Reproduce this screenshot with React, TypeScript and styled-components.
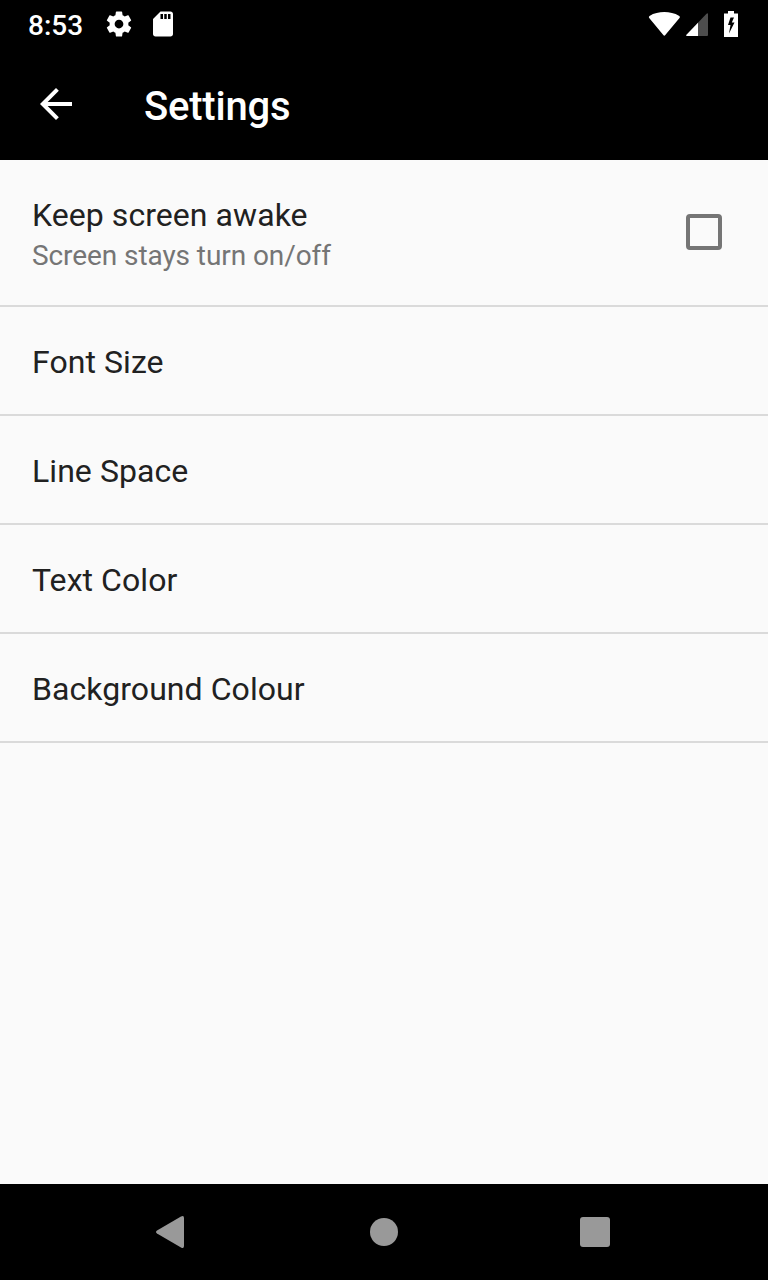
import React from "react";
import styled, { createGlobalStyle } from "styled-components";

const GlobalStyle = createGlobalStyle`
  * { box-sizing: border-box; }
  body { margin: 0; background: #fafafa; font-family: Roboto, sans-serif; }
`;

const Screen = styled.div`
  display: flex;
  flex-direction: column;
  width: 768px;
  height: 1280px;
  background: #fafafa;
  overflow: hidden;
`;

const StatusBar = styled.header`
  display: flex;
  align-items: center;
  flex: none;
  height: 48px;
  padding: 0 28px;
  background: #000;
  color: #fff;
`;

const Clock = styled.span`
  width: 78px;
  padding-top: 3px;
  font-size: 28px;
  line-height: 32px;
  font-weight: 500;
`;

const StatusIcons = styled.svg`
  display: block;
  flex: none;
`;

const Spacer = styled.div`
  flex: 1;
`;

const AppBar = styled.div`
  display: flex;
  align-items: center;
  flex: none;
  height: 112px;
  padding: 0 32px;
  background: #000;
  color: #fff;
`;

const BackButton = styled.button`
  display: block;
  width: 48px;
  height: 48px;
  margin: 0 64px 0 0;
  padding: 0;
  border: 0;
  background: none;
  color: inherit;
`;

const Title = styled.h1`
  margin: 0;
  padding-top: 6px;
  font-size: 40px;
  line-height: 48px;
  font-weight: 500;
  letter-spacing: -0.2px;
`;

const List = styled.main`
  flex: 1;
`;

const Row = styled.div<{ $tall?: boolean }>`
  display: flex;
  align-items: center;
  justify-content: space-between;
  height: ${(p) => (p.$tall ? 147 : 109)}px;
  padding: ${(p) => (p.$tall ? "0 46px 2px 32px" : "2px 46px 0 32px")};
  border-bottom: 2px solid #dadada;
`;

const Label = styled.div`
  font-size: 32px;
  line-height: 38px;
  letter-spacing: 0.06px;
  color: #212121;
`;

const Summary = styled.div`
  padding-top: 5px;
  font-size: 28px;
  line-height: 33px;
  letter-spacing: -0.08px;
  color: #757575;
`;

const RowText = styled.div`
  padding-top: 4px;
`;

const Checkbox = styled.div`
  width: 36px;
  height: 36px;
  border: 4px solid #757575;
  border-radius: 4px;
`;

const NavBar = styled.nav`
  display: flex;
  flex: none;
  height: 96px;
  background: #000;
`;

const options = ["Font Size", "Line Space", "Text Color", "Background Colour"];

export default function App() {
  return (
    <Screen>
      <GlobalStyle />
      <StatusBar>
        <Clock>8:53</Clock>
        <StatusIcons width="70" height="48" viewBox="106 0 70 48" fill="#fff">
          <path
            transform="translate(104 9) scale(1.25)"
            d="M19.43 12.98c.04-.32.07-.64.07-.98s-.03-.66-.07-.98l2.11-1.65c.19-.15.24-.42.12-.64l-2-3.46c-.12-.22-.39-.3-.61-.22l-2.49 1c-.52-.4-1.08-.73-1.69-.98l-.38-2.65C14.46 2.18 14.25 2 14 2h-4c-.25 0-.46.18-.49.42l-.38 2.65c-.61.25-1.17.59-1.69.98l-2.49-1c-.23-.09-.49 0-.61.22l-2 3.46c-.13.22-.07.49.12.64l2.11 1.65c-.04.32-.07.65-.07.98s.03.66.07.98l-2.11 1.65c-.19.15-.24.42-.12.64l2 3.46c.12.22.39.3.61.22l2.49-1c.52.4 1.08.73 1.69.98l.38 2.65c.03.24.24.42.49.42h4c.25 0 .46-.18.49-.42l.38-2.65c.61-.25 1.17-.59 1.69-.98l2.49 1c.23.09.49 0 .61-.22l2-3.46c.12-.22.07-.49-.12-.64l-2.11-1.65zM12 15.5c-1.93 0-3.5-1.57-3.5-3.5s1.57-3.5 3.5-3.5 3.5 1.57 3.5 3.5-1.57 3.5-3.5 3.5z"
          />
          <path
            transform="translate(148 9) scale(1.25)"
            d="M18 2h-8L4.020 8 4 20c0 1.100.9 2 2 2h12c1.100 0 2-.9 2-2V4c0-1.100-.9-2-2-2zm-6 6h-2V4h2v4zm3 0h-2V4h2v4zm3 0h-2V4h2v4z"
          />
        </StatusIcons>
        <Spacer />
        <StatusIcons width="92" height="48" viewBox="648 0 92 48" fill="#fff">
          <path d="M663.300 35Q664.300 36.300 665.300 35L679.500 18Q680.500 16.800 679.300 16C674.500 13 669.500 12 664.300 12S654 13 649.500 16Q648.300 16.800 649.200 18Z" />
          <path d="M708 14V35Q708 36 707 36H687Q685.500 36 686.500 34.800L706.500 13.800Q708 12.500 708 14Z" fillOpacity=".3" />
          <path d="M698 22.700V36H687Q685.500 36 686.500 34.800Z" />
          <path
            fillRule="evenodd"
            d="M728 11H734V13.500H738V37H724V13.500H728ZM730.500 17.500L728 25H730.500L729 33.500L734.500 22.500H731.800L734 17.500Z"
          />
        </StatusIcons>
      </StatusBar>
      <AppBar>
        <BackButton aria-label="Back">
          <svg width="48" height="48" viewBox="0 0 24 24" fill="currentColor">
            <path d="M20 11H7.830l5.590-5.590L12 4l-8 8 8 8 1.410-1.410L7.830 13H20v-2z" />
          </svg>
        </BackButton>
        <Title>Settings</Title>
      </AppBar>
      <List>
        <Row $tall>
          <RowText>
            <Label>Keep screen awake</Label>
            <Summary>Screen stays turn on/off</Summary>
          </RowText>
          <Checkbox role="checkbox" aria-checked="false" />
        </Row>
        {options.map((name) => (
          <Row key={name}>
            <Label>{name}</Label>
          </Row>
        ))}
      </List>
      <NavBar>
        <svg width="768" height="96" viewBox="0 1184 768 96" fill="#999">
          <path d="M184 1218V1246Q184 1249 181 1247.500L157 1233.500Q155 1232 157 1230.500L181 1216.500Q184 1215 184 1218Z" />
          <circle cx="384" cy="1232" r="14" />
          <rect x="580" y="1217" width="30" height="30" rx="3" />
        </svg>
      </NavBar>
    </Screen>
  );
}
